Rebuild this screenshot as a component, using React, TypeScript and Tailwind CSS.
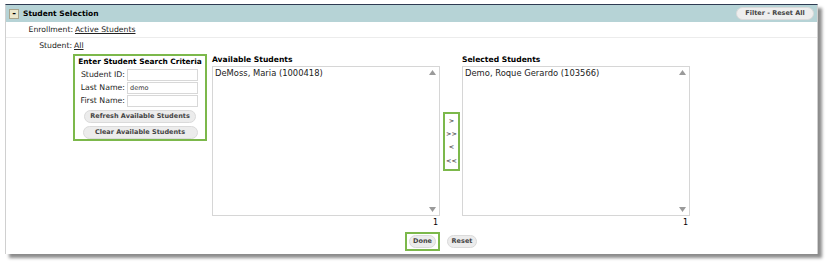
import React from 'react';

const font = "font-['DejaVu_Sans',Verdana,sans-serif]";

const Tri: React.FC<{ up?: boolean }> = ({ up }) => (
  <svg width="7" height="5" viewBox="0 0 7 5" className="block">
    <path d={up ? 'M3.5 0 L7 5 L0 5 Z' : 'M0 0 L7 0 L3.5 5 Z'} fill="#9a9a9a" />
  </svg>
);

const ListBox: React.FC<{ title: string; item: string }> = ({ title, item }) => (
  <div className="flex flex-col w-[228px]">
    <div className="h-[12px] leading-[12px] font-bold text-[7.6px] text-black whitespace-nowrap">{title}</div>
    <div className="relative h-[150px] border border-[#d6d6d6] bg-white">
      <div className="pl-[2px] pt-[1px] text-[8.4px] leading-[10px] text-[#222] whitespace-nowrap">{item}</div>
      <div className="absolute right-[3px] top-[3px]"><Tri up /></div>
      <div className="absolute right-[3px] bottom-[3px]"><Tri /></div>
    </div>
    <div className="text-right text-[8px] leading-[14px] pr-[2px] text-black">1</div>
  </div>
);

const Field: React.FC<{ label: string; value?: string }> = ({ label, value }) => (
  <div className="flex items-center h-[13px]">
    <div className="w-[51px] text-right pr-[2px] text-[7.8px] text-[#222] whitespace-nowrap">{label}</div>
    <div className="w-[71px] h-[12px] border border-[#d8d8d8] bg-white text-[6.5px] leading-[10px] pl-[2px] text-[#333]">
      {value}
    </div>
  </div>
);

const Pill: React.FC<{ children: React.ReactNode; className?: string }> = ({ children, className }) => (
  <div
    className={`h-[13px] rounded-full bg-[#ececec] border border-[#dadada] flex items-center justify-center font-bold text-[6.5px] text-[#444] whitespace-nowrap ${className ?? ''}`}
  >
    {children}
  </div>
);

export default function App() {
  return (
    <div className={`w-[828px] h-[263px] bg-white pt-[4px] pl-[5px] ${font}`}>
      <div className="w-[813px] h-[250px] bg-white border-t border-t-[#2e3b52] border-x border-x-[#d0d0d0] shadow-[4px_4px_3px_rgba(0,0,0,0.45)]">
        {/* Header */}
        <div className="h-[17px] bg-[#b6d3d6] flex items-center justify-between pl-[3px] pr-[3px]">
          <div className="flex items-center">
            <div className="w-[10px] h-[10px] bg-[#ebe7cc] border border-[#a9a48c] flex items-center justify-center text-[9px] font-bold leading-none text-black">
              -
            </div>
            <span className="ml-[4px] font-bold text-[7.5px] text-black whitespace-nowrap">Student Selection</span>
          </div>
          <Pill className="w-[78px] rounded-[7px] bg-[#eeeeee]">Filter - Reset All</Pill>
        </div>

        {/* Enrollment */}
        <div className="h-[16px] flex items-center border-b border-[#ececec] text-[7.7px] text-[#222]">
          <div className="w-[67px] text-right">Enrollment:</div>
          <span className="ml-[2px] underline">Active Students</span>
        </div>

        {/* Student */}
        <div className="h-[15px] flex items-center text-[7.7px] text-[#222]">
          <div className="w-[66px] text-right">Student:</div>
          <span className="ml-[2px] underline">All</span>
        </div>

        {/* Main */}
        <div className="flex pl-[67px] pt-[1px]">
          <div className="w-[134px] h-[87px] border-2 border-[#7cb84b] flex flex-col items-center">
            <div className="font-bold text-[7.4px] leading-[11px] text-black whitespace-nowrap">Enter Student Search Criteria</div>
            <div className="flex flex-col mt-[1px] self-start pl-[1px]">
              <Field label="Student ID:" />
              <Field label="Last Name:" value="demo" />
              <Field label="First Name:" />
            </div>
            <Pill className="w-[112px] mt-[3px]">Refresh Available Students</Pill>
            <Pill className="w-[115px] mt-[3px]">Clear Available Students</Pill>
          </div>

          <div className="ml-[5px]">
            <ListBox title="Available Students" item="DeMoss, Maria (1000418)" />
          </div>

          <div className="ml-[3px] mt-[58px] w-[17px] h-[59px] border-2 border-[#7cb84b] flex flex-col items-center justify-around py-[1px] text-[6.5px] font-bold text-[#555]">
            <span>&gt;</span>
            <span>&gt;&gt;</span>
            <span>&lt;</span>
            <span>&lt;&lt;</span>
          </div>

          <div className="ml-[2px]">
            <ListBox title="Selected Students" item="Demo, Roque Gerardo (103566)" />
          </div>
        </div>

        {/* Buttons */}
        <div className="flex items-center pl-[399px] mt-[2px]">
          <div className="w-[35px] h-[19px] border-2 border-[#7cb84b] flex items-center justify-center">
            <Pill className="w-[27px]">Done</Pill>
          </div>
          <Pill className="w-[30px] ml-[7px]">Reset</Pill>
        </div>
      </div>
    </div>
  );
}
